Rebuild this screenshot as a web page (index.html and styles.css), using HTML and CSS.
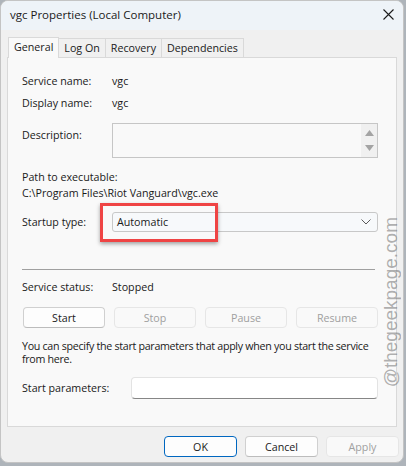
FILE: index.html
```html
<!DOCTYPE html>
<html lang="en">
<head>
<meta charset="utf-8">
<title>vgc Properties (Local Computer)</title>
<link rel="stylesheet" href="styles.css">
</head>
<body>
<div class="window">
  <div class="titlebar">
    <span class="title">vgc Properties (Local Computer)</span>
    <svg class="close" width="11" height="11" viewBox="0 0 11 11" aria-hidden="true">
      <path d="M0.5 0.5 L10.5 10.5 M10.5 0.5 L0.5 10.5" stroke="#1b1b1b" stroke-width="1.1" fill="none"/>
    </svg>
  </div>

  <div class="content">
    <div class="tabs">
      <div class="tab active">General</div>
      <div class="tab">Log On</div>
      <div class="tab">Recovery</div>
      <div class="tab">Dependencies</div>
    </div>

    <div class="panel">
      <div class="row row-name">
        <span class="label">Service name:</span>
        <span class="value">vgc</span>
      </div>
      <div class="row row-display">
        <span class="label">Display name:</span>
        <span class="value">vgc</span>
      </div>
      <div class="row row-desc">
        <span class="label label-top">Description:</span>
        <div class="textarea">
          <div class="scroll">
            <svg width="9" height="6" viewBox="0 0 9 6"><path d="M4.5 0 L9 6 L0 6 Z" fill="#a3a3a3"/></svg>
            <svg width="9" height="6" viewBox="0 0 9 6"><path d="M0 0 L9 0 L4.5 6 Z" fill="#a3a3a3"/></svg>
          </div>
        </div>
      </div>
      <div class="path-label">Path to executable:</div>
      <div class="path">C:\Program Files\Riot Vanguard\vgc.exe</div>
      <div class="row row-startup">
        <span class="label">Startup type:</span>
        <div class="combo">
          <span>Automatic</span>
          <svg width="10" height="6" viewBox="0 0 10 6"><path d="M0.5 0.5 L5 5 L9.5 0.5" stroke="#5a5a5a" stroke-width="1" fill="none"/></svg>
        </div>
      </div>

      <div class="separator"></div>

      <div class="row row-status">
        <span class="label">Service status:</span>
        <span class="value">Stopped</span>
      </div>
      <div class="service-buttons">
        <button class="btn">Start</button>
        <button class="btn" disabled>Stop</button>
        <button class="btn" disabled>Pause</button>
        <button class="btn" disabled>Resume</button>
      </div>
      <p class="note">You can specify the start parameters that apply when you start the service from here.</p>
      <div class="row row-params">
        <span class="label">Start parameters:</span>
        <div class="input"></div>
      </div>
    </div>

    <div class="actions">
      <button class="btn default">OK</button>
      <button class="btn">Cancel</button>
      <button class="btn" disabled>Apply</button>
    </div>
  </div>

  <div class="highlight"></div>
  <div class="watermark">@thegeekpage.com</div>
</div>
</body>
</html>
```

FILE: styles.css
```css
* {
  box-sizing: border-box;
}

html, body {
  margin: 0;
  padding: 0;
}

body {
  background: #aeb4ba;
  width: 406px;
  height: 466px;
  overflow: hidden;
  font-family: "Open Sans", "Noto Sans", sans-serif;
  font-size: 10.7px;
  color: #1a1a1a;
}

.window {
  position: relative;
  width: 404px;
  height: 463px;
  background: #f0f0f0;
  border: 1px solid #c4c4c4;
  border-radius: 8px;
  overflow: hidden;
}

/* title bar */
.titlebar {
  height: 29px;
  background: #eef3f8;
  display: flex;
  align-items: center;
  justify-content: space-between;
  padding: 0 9px 3px 9px;
}

.title {
  font-size: 11.5px;
  color: #1a1a1a;
}

.close {
  display: block;
}

/* tabs + page */
.content {
  padding: 7px 0 0 6px;
}

.tabs {
  display: flex;
  align-items: flex-end;
  height: 20px;
  padding-left: 1px;
}

.tab {
  height: 19px;
  padding: 1px 5px 0;
  display: flex;
  align-items: center;
  background: #f0f0f0;
  border: 1px solid #d9d9d9;
  border-bottom: none;
  border-left: none;
  line-height: 1;
}

.tab.active {
  height: 21px;
  margin-bottom: -1px;
  background: #f9f9f9;
  border-left: 1px solid #d9d9d9;
  position: relative;
  z-index: 1;
  padding: 0 5px 2px 5px;
}

.panel {
  height: 370px;
  width: 390px;
  background: #f9f9f9;
  border: 1px solid #d9d9d9;
  padding: 16px 18px 0 14px;
  display: flex;
  flex-direction: column;
}

.row {
  display: grid;
  grid-template-columns: 90px 1fr;
  align-items: center;
  line-height: 15px;
}

.row-display {
  margin-top: 7px;
}

.row-desc {
  margin-top: 12px;
  align-items: start;
}

.label-top {
  margin-top: 5px;
}

.textarea {
  height: 35px;
  border: 1px solid #c6c6c6;
  background: #f9f9f9;
  display: flex;
  justify-content: flex-end;
}

.scroll {
  width: 16px;
  background: #f0f0f0;
  display: flex;
  flex-direction: column;
  align-items: center;
  justify-content: space-between;
  padding: 6px 0 6px;
}

.scroll svg {
  display: block;
}

.path-label {
  margin-top: 12px;
  line-height: 15px;
}

.path {
  line-height: 15px;
  margin-top: 1px;
}

.row-startup {
  margin-top: 11px;
}

.combo {
  height: 20px;
  border: 1px solid #c8c8c8;
  border-radius: 3px;
  background: #f7f9fb;
  display: flex;
  align-items: center;
  justify-content: space-between;
  padding: 0 6px 0 4px;
}

.separator {
  margin-top: 37px;
  height: 1px;
  background: #a0a0a0;
  margin-right: 3px;
}

.row-status {
  margin-top: 10px;
}

.service-buttons {
  margin: 12px 0 0 1px;
  display: grid;
  grid-template-columns: repeat(4, 1fr);
  gap: 9px;
}

.btn {
  font-family: inherit;
  font-size: 10.7px;
  color: #1a1a1a;
  height: 21px;
  padding: 0;
  background: #fdfdfd;
  border: 1px solid #d0d0d0;
  border-bottom-color: #bcbcbc;
  border-radius: 4px;
}

.btn:disabled {
  background: #f9f9f9;
  border-color: #e6e6e6;
  color: #a0a0a0;
}

.note {
  margin: 12px 0 0;
  line-height: 13px;
  letter-spacing: -0.3px;
}

.row-params {
  margin-top: 11px;
  grid-template-columns: 109px 1fr;
}

.input {
  height: 22px;
  background: #ffffff;
  border: 1px solid #e3e3e3;
  border-bottom-color: #868686;
  border-radius: 4px;
}

.actions {
  display: flex;
  justify-content: flex-end;
  gap: 8px;
  padding: 9px 4px 0 0;
}

.actions .btn {
  width: 73px;
}

.actions .btn.default {
  border: 1px solid #0067c0;
}

/* annotation drawn over the startup type field */
.highlight {
  position: absolute;
  left: 99px;
  top: 202px;
  width: 118px;
  height: 39px;
  border: 3px solid #ef4444;
  box-shadow: 0 2px 4px rgba(0, 0, 0, 0.35);
}

.watermark {
  position: absolute;
  left: 380px;
  top: 216px;
  writing-mode: vertical-rl;
  transform: rotate(180deg);
  font-family: "Liberation Sans", Arial, sans-serif;
  font-size: 19px;
  line-height: 19px;
  color: rgba(110, 110, 110, 0.55);
  white-space: nowrap;
}
```
